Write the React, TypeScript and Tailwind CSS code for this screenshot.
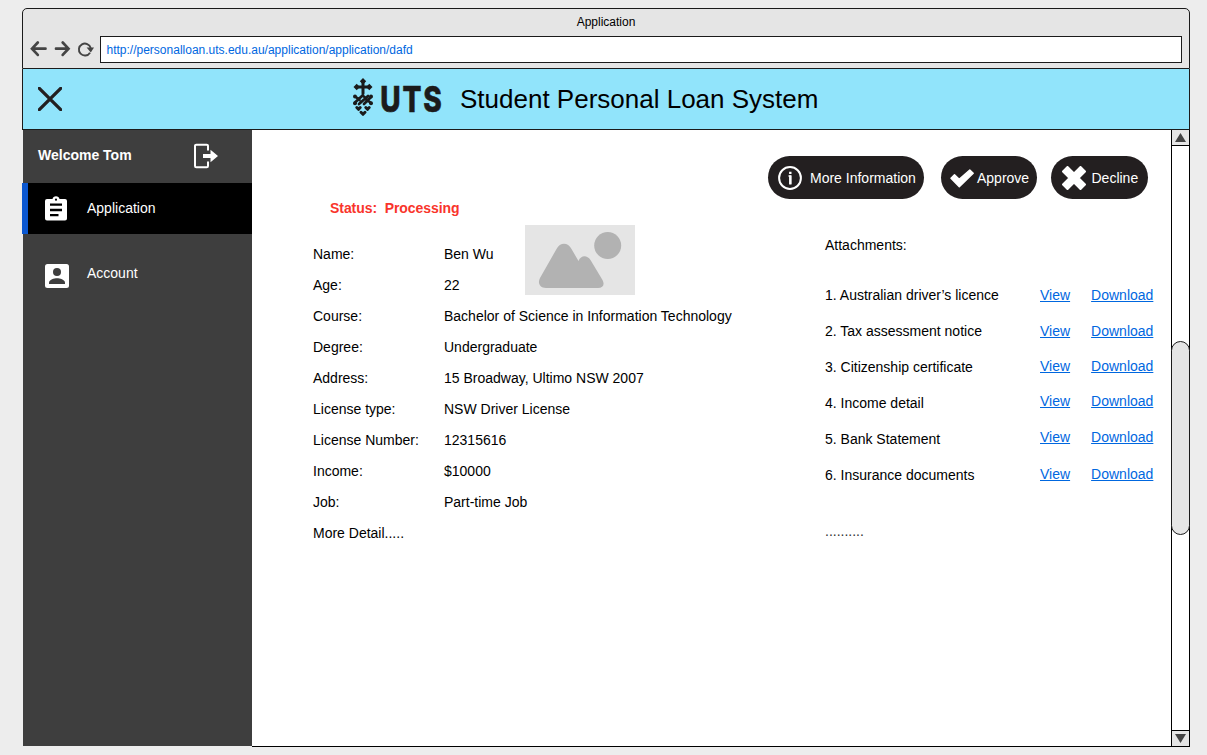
import React from "react";

const details = [
  ["Name:", "Ben Wu"],
  ["Age:", "22"],
  ["Course:", "Bachelor of Science in Information Technology"],
  ["Degree:", "Undergraduate"],
  ["Address:", "15 Broadway, Ultimo NSW 2007"],
  ["License type:", "NSW Driver License"],
  ["License Number:", "12315616"],
  ["Income:", "$10000"],
  ["Job:", "Part-time Job"],
  ["More Detail.....", ""],
];

const attachments = [
  { name: "1. Australian driver’s licence", lift: "" },
  { name: "2. Tax assessment notice", lift: "" },
  { name: "3. Citizenship certificate", lift: "pb-px" },
  { name: "4. Income detail", lift: "pb-[3px]" },
  { name: "5. Bank Statement", lift: "pb-[3px]" },
  { name: "6. Insurance documents", lift: "pb-px" },
];

function Logo() {
  return (
    <svg width="92" height="40" viewBox="0 0 92 40" className="shrink-0 overflow-visible">
      <g stroke="#1b1b1b" fill="none" strokeLinecap="round" strokeLinejoin="round">
        <path d="M11 4v12.500M5 10h12" strokeWidth="3" />
        <path d="M3 25.500l7.500-7 2 1.500M7 27l9-8M12 27l7-7M4.500 20.500l3 2.500M14.500 22.500l4.500 3.500" strokeWidth="2.700" />
        <path d="M4.800 30.500l1.700 1.800 1.700-1.800M13.800 30.500l1.700 1.800 1.700-1.800M9 35.300l2 2 2-2" strokeWidth="3" />
      </g>
      <g fill="#1b1b1b">
        <path d="M11 1l3.200 3.200L11 7.400 7.800 4.200zM4.700 6.800L7.900 10l-3.200 3.200L1.500 10zM17.300 6.800l3.200 3.200-3.200 3.200-3.200-3.200z" />
        <circle cx="3" cy="19.500" r="2" />
        <circle cx="19" cy="19.500" r="2" />
        <circle cx="3" cy="26.300" r="2" />
        <circle cx="19" cy="26.300" r="2" />
      </g>
      <text
        transform="translate(28.300 34.500) scale(.8 1)"
        fill="#1b1b1b"
        stroke="#1b1b1b"
        strokeWidth=".6"
        fontFamily="Inter, sans-serif"
        fontWeight="800"
        fontSize="35"
        letterSpacing="2.300"
      >
        UTS
      </text>
    </svg>
  );
}

function BrowserBar() {
  return (
    <header className="flex h-[61px] shrink-0 flex-col rounded-t-[5px] border border-[#1b1b1b] bg-[#e5e5e5]">
      <div className="h-[27px] text-center text-[12px] leading-[26px]">Application</div>
      <div className="flex items-center pr-[7px]">
        <svg width="77" height="27" viewBox="0 0 77 27" fill="none" stroke="#444" strokeWidth="2.700">
          <path d="M9.500 12.700h13M14.800 6.500L9 12.700l5.800 6.200" strokeLinecap="round" />
          <path d="M33 12.700h12M39.700 6.500l5.800 6.200-5.800 6.200" strokeLinecap="round" />
          <path d="M67 16.700a6 6 0 1 1 .700-4.700" strokeWidth="1.900" />
          <path d="M63.600 11.600h7.400l-3.200 4.800z" fill="#444" stroke="none" />
        </svg>
        <div className="h-[27px] flex-1 border border-[#1b1b1b] bg-white pl-[5.500px] text-[12px] leading-[26px] text-[#0067df]">
          http://personalloan.uts.edu.au/application/application/dafd
        </div>
      </div>
    </header>
  );
}

function Sidebar() {
  return (
    <aside className="mb-px ml-px w-[229px] shrink-0 bg-[#3e3e3e] text-[14px] text-white">
      <div className="flex h-[53px] items-start pl-[15px] pt-[13px]">
        <b className="w-[155px] pt-[2px] leading-5">Welcome Tom</b>
        <svg width="25" height="26" viewBox="0 0 25 26" fill="none">
          <path d="M15 7.500V3a1.300 1.300 0 0 0-1.300-1.300H3.300A1.300 1.300 0 0 0 2 3v20a1.300 1.300 0 0 0 1.300 1.300h10.400A1.300 1.300 0 0 0 15 23v-4.500" stroke="white" strokeWidth="2" />
          <path d="M10 11h7.500V6.800l7.500 6.200-7.500 6.200V15H10z" fill="white" />
        </svg>
      </div>
      <div className="-ml-px flex h-[51px] items-center border-l-[6px] border-[#0b57d0] bg-black">
        <svg width="22" height="25" viewBox="0 0 22 25" className="ml-[17px]">
          <path fill="white" d="M2 3h5.500a3.600 3.600 0 0 1 7 0H20a2 2 0 0 1 2 2v17.500a2 2 0 0 1-2 2H2a2 2 0 0 1-2-2V5a2 2 0 0 1 2-2z" />
          <path stroke="black" strokeWidth="2.300" d="M5 8.700h12M5 14h12M5 19.200h8.500" />
          <circle cx="11" cy="3.700" r="1.100" fill="black" />
        </svg>
        <span className="ml-5">Application</span>
      </div>
      <div className="flex h-[83px] items-center">
        <svg width="24" height="24" viewBox="0 0 24 24" className="ml-[22px]">
          <rect width="24" height="24" rx="2.500" fill="white" />
          <circle cx="12" cy="8" r="4" fill="#3e3e3e" />
          <path d="M4 20v-1.500c0-2.700 5.300-4.200 8-4.200s8 1.500 8 4.200V20z" fill="#3e3e3e" />
        </svg>
        <span className="ml-[18px] pb-[5px]">Account</span>
      </div>
    </aside>
  );
}

function Actions() {
  return (
    <div className="flex h-[43px] justify-end pr-[23px] text-[14px] text-white">
      <button className="mr-[17px] flex w-[156px] items-center rounded-full bg-[#231f20] pl-[10px]">
        <svg width="24" height="24" viewBox="0 0 24 24" fill="none" stroke="white" strokeWidth="2">
          <circle cx="12" cy="12" r="10.900" />
          <path d="M10.500 10h2V18" strokeWidth="1.600" />
          <path d="M12.300 9.500v9M12.300 5.700v2.300" strokeWidth="2.400" />
        </svg>
        <span className="ml-2 whitespace-nowrap pt-px">More Information</span>
      </button>
      <button className="mr-[14px] flex w-[96px] items-center rounded-full bg-[#231f20] pl-[9px]">
        <svg width="24" height="24" viewBox="0 0 24 24" className="overflow-visible">
          <path fill="white" stroke="white" strokeWidth="1.500" strokeLinejoin="round" d="M1 12.300L4.500 8.800 9.200 13.200 19.800 4 23.200 7.300 9.300 20.700z" />
        </svg>
        <span className="ml-[3px] pt-px">Approve</span>
      </button>
      <button className="flex w-[97px] items-center rounded-full bg-[#231f20] pl-[11px]">
        <svg width="24" height="24" viewBox="0 0 24 24" fill="white" stroke="white" strokeWidth="2" strokeLinejoin="round">
          <path d="M5.500 1L12 7.500 18.500 1 23 5.500 16.500 12 23 18.500 18.500 23 12 16.500 5.500 23 1 18.500 7.500 12 1 5.500z" />
        </svg>
        <span className="ml-[5.500px] pt-px">Decline</span>
      </button>
    </div>
  );
}

function Photo() {
  return (
    <svg width="110" height="70" viewBox="0 0 110 70" className="absolute left-[212px] top-[-14px]">
      <rect width="110" height="70" fill="#e5e5e5" />
      <circle cx="82.700" cy="20.500" r="13.500" fill="#b2b2b2" />
      <path d="M21 63C14.500 63 12.500 58 15 53L31.500 24C35 17 43 17 46.500 24L53.500 36C56 30 62 30 65.500 35L77.500 55C80 60 78 63 73 63Z" fill="#b2b2b2" />
    </svg>
  );
}

function Scrollbar() {
  return (
    <div className="flex w-[19px] shrink-0 flex-col border-x border-black">
      <div className="flex h-4 items-center justify-center border-b border-black bg-[#e5e5e5]">
        <svg width="11" height="9"><path d="M0 9L5.500 0 11 9z" fill="#444" /></svg>
      </div>
      <div className="flex-1 pt-[195px]">
        <div className="-mx-px h-[194px] rounded-full border border-[#1b1b1b] bg-[#e5e5e5]" />
      </div>
      <div className="flex h-4 items-center justify-center border-t border-black bg-[#e5e5e5]">
        <svg width="11" height="9"><path d="M0 0L5.500 9 11 0z" fill="#444" /></svg>
      </div>
    </div>
  );
}

export default function App() {
  return (
    <div className="h-[755px] w-[1207px] overflow-hidden bg-[#ededed] pl-[22px] pt-2 font-['Liberation_Sans',Arial,sans-serif] text-black">
      <div className="flex h-[739px] w-[1168px] flex-col">
        <BrowserBar />
        <div className="flex h-[61px] shrink-0 items-center border-x border-b border-[#1b1b1b] bg-[#91e4fb] pl-[15px]">
          <svg width="24" height="24" viewBox="0 0 24 24" stroke="#231f20" strokeWidth="3.300" strokeLinecap="round">
            <path d="M1.300 1.300l21.400 21.400M22.700 1.300L1.300 22.700" />
          </svg>
          <div className="ml-[290px] pb-1"><Logo /></div>
          <h1 className="ml-4 text-[26px] leading-[60px]">Student Personal Loan System</h1>
        </div>
        <div className="flex min-h-0 flex-1">
          <Sidebar />
          <div className="flex flex-1 border-b border-black bg-white">
            <main className="flex-1 pt-[26px] text-[14px]">
              <Actions />
              <div className="flex pl-[61px]">
                <section className="w-[512px]">
                  <p className="mb-[22px] pl-[17px] font-bold leading-[18px] tracking-[-0.06px] text-[#f9342b]">
                    Status:&nbsp; Processing
                  </p>
                  <div className="relative">
                    {details.map(([label, value]) => (
                      <div key={label} className="flex h-[31px] leading-[31px]">
                        <span className="w-[131px]">{label}</span>
                        <span>{value}</span>
                      </div>
                    ))}
                    <Photo />
                  </div>
                </section>
                <section className="pt-[37px]">
                  <p className="mb-[23px] leading-[18px]">Attachments:</p>
                  {attachments.map((item) => (
                    <div key={item.name} className="flex h-9 items-center">
                      <span className="w-[215px]">{item.name}</span>
                      <span className={item.lift}>
                        <a className="mr-[21px] text-[#0067df] underline">View</a>
                        <a className="text-[#0067df] underline">Download</a>
                      </span>
                    </div>
                  ))}
                  <p className="pt-[29px] leading-[18px] text-[#333]">..........</p>
                </section>
              </div>
            </main>
            <Scrollbar />
          </div>
        </div>
      </div>
    </div>
  );
}
